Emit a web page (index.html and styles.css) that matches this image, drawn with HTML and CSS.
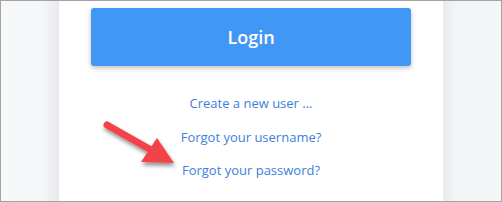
FILE: index.html
```html
<!DOCTYPE html>
<html>
<head>
<meta charset="utf-8">
<link rel="stylesheet" href="styles.css">
</head>
<body>
<div class="frame">
  <div class="side side-left"></div>
  <div class="card">
    <button class="login">Login</button>
    <div class="links">
      <a class="link" href="#">Create a new user ...</a>
      <a class="link" href="#">Forgot your username?</a>
      <a class="link" href="#">Forgot your password?</a>
    </div>
    <svg class="arrow" width="100" height="64" viewBox="0 0 100 64">
      <defs>
        <filter id="sh" x="-20%" y="-20%" width="150%" height="160%">
          <feGaussianBlur in="SourceAlpha" stdDeviation="2"/>
          <feOffset dx="1" dy="3" result="b"/>
          <feComponentTransfer><feFuncA type="linear" slope="0.45"/></feComponentTransfer>
          <feMerge><feMergeNode/><feMergeNode in="SourceGraphic"/></feMerge>
        </filter>
      </defs>
      <g filter="url(#sh)" fill="#f4424a">
        <line x1="12" y1="12" x2="58" y2="38" stroke="#f4424a" stroke-width="7" stroke-linecap="round"/>
        <polygon points="62,25 79,50 46,49"/>
      </g>
    </svg>
  </div>
  <div class="side side-right"></div>
</div>
</body>
</html>
```
FILE: styles.css
```css
html, body {
  margin: 0;
  padding: 0;
}
body {
  width: 502px;
  height: 202px;
  overflow: hidden;
  font-family: "Open Sans", "Noto Sans", sans-serif;
}
.frame {
  box-sizing: border-box;
  width: 502px;
  height: 202px;
  border: 1px solid #a3a3a3;
  display: flex;
  background: #f5f6f8;
}
.side {
  height: 100%;
}
.side-left {
  width: 58px;
  background: linear-gradient(to right, #f7f8fa 0%, #f5f6f8 70%, #e9eaed 100%);
}
.side-right {
  flex: 1;
  background: linear-gradient(to right, #e9eaed 0px, #f3f4f6 12px, #f5f6f8 100%);
}
.card {
  position: relative;
  width: 384px;
  background: #ffffff;
  display: flex;
  flex-direction: column;
  align-items: center;
}
.login {
  margin-top: 7px;
  width: 320px;
  height: 58px;
  border: none;
  border-radius: 3px;
  background: #4197f6;
  color: #ffffff;
  font-family: "Open Sans", sans-serif;
  font-weight: 600;
  font-size: 18px;
  box-shadow: 0 2px 5px rgba(0, 0, 0, 0.25);
  padding: 0 0 0 0;
}
.links {
  margin-top: 21px;
  display: flex;
  flex-direction: column;
  align-items: center;
}
.link {
  font-family: "Open Sans", sans-serif;
  font-size: 13px;
  line-height: 33.5px;
  color: #3d7fd9;
  text-decoration: none;
}
.arrow {
  position: absolute;
  left: 36px;
  top: 112px;
}
```
